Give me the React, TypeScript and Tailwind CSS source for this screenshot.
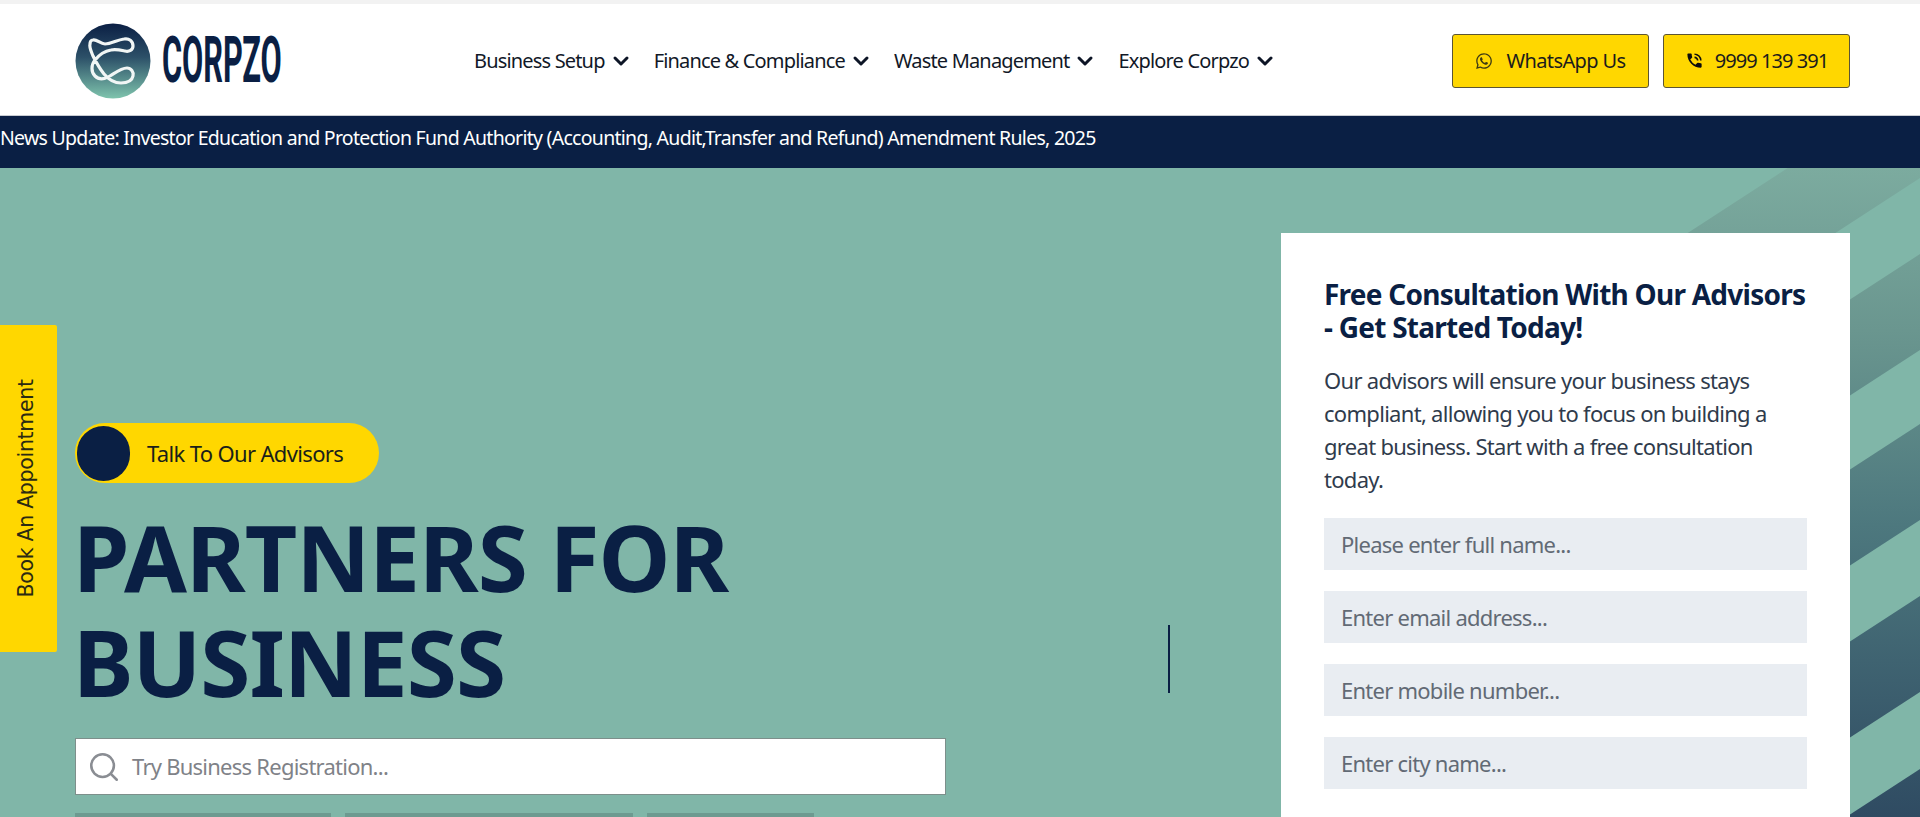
import { ChevronDown, Search } from 'lucide-react';
import { FaWhatsapp } from 'react-icons/fa';
import { MdPhoneInTalk } from 'react-icons/md';

const navItems = ['Business Setup', 'Finance & Compliance', 'Waste Management', 'Explore Corpzo'];
const placeholders = ['Please enter full name...', 'Enter email address...', 'Enter mobile number...', 'Enter city name...'];

function Logo() {
  return (
    <svg width="76" height="76" viewBox="0 0 76 76" className="shrink-0">
      <defs>
        <linearGradient id="logoFill" x1="0" y1="0" x2="0" y2="1">
          <stop offset="0" stopColor="#0b1f44" />
          <stop offset="0.45" stopColor="#2c5068" />
          <stop offset="1" stopColor="#7fc4ad" />
        </linearGradient>
      </defs>
      <circle cx="38" cy="38" r="37.5" fill="url(#logoFill)" />
      <path
        d="M18 17C22 16 25 21 30 21C36 21 42 17 49 16C54 15 58 18 58 23C58 27 54 29 50 28C45 27 41 26 36 27C30 28 24 32 20 37C16 42 16 49 20 53C24 57 30 56 35 53C40 50 46 45 52 45C56 45 59 49 58 53C57 58 52 60 46 60C40 60 34 57 29 51C25 46 21 39 18 33C16 28 14 24 15 21C15 19 16 17 18 17Z"
        fill="none"
        stroke="#f1f6f5"
        strokeWidth="3.2"
        strokeLinejoin="round"
      />
    </svg>
  );
}

function Stripes() {
  const bands = [128, 300, 470, 642, 815];
  return (
    <svg className="absolute inset-0" width="1920" height="649" viewBox="0 168 1920 649">
      <defs>
        <linearGradient id="bandFill" gradientUnits="userSpaceOnUse" x1="0" y1="168" x2="0" y2="817">
          <stop offset="0" stopColor="#7cab9f" />
          <stop offset="0.25" stopColor="#6a968f" />
          <stop offset="0.55" stopColor="#4d787e" />
          <stop offset="1" stopColor="#2f4b62" />
        </linearGradient>
      </defs>
      {bands.map(y => (
        <polygon
          key={y}
          points={`1920,${y - 46} 1920,${y + 50} 1600,${y + 258} 1600,${y + 162}`}
          fill="url(#bandFill)"
        />
      ))}
    </svg>
  );
}

export default function App() {
  return (
    <div className="h-[817px] overflow-hidden bg-white font-['Noto_Sans',sans-serif] text-[#0a1f44] relative">
      <div className="h-[4px] bg-[#f2f2f2]" />
      <header className="h-[112px] flex items-center pl-[75px] pr-[70px] pt-[2px] border-b border-[#c9ccd2]">
        <div className="flex items-center w-[399px] gap-[11px]">
          <Logo />
          <span className="font-['Roboto',sans-serif] font-bold text-[64px] leading-none w-[118px] inline-block origin-left scale-x-[0.48] whitespace-nowrap">
            CORPZO
          </span>
        </div>
        <nav className="flex items-center gap-[21px] text-[20px] tracking-[-0.83px] text-[#111827]">
          {navItems.map(item => (
            <a key={item} className="flex items-center gap-[4px] whitespace-nowrap">
              {item}
              <ChevronDown size={24} strokeWidth={3} className="text-[#0d1526]" />
            </a>
          ))}
        </nav>
        <div className="ml-auto flex items-center gap-[14px]">
          <a className="w-[197px] h-[54px] flex items-center justify-center gap-[13px] bg-[#ffd700] border border-[#5c5533] rounded-[3px] text-[20px] tracking-[-0.6px] text-[#1c1c1c]">
            <FaWhatsapp size={18} className="text-[#3e3a14]" />
            WhatsApp Us
          </a>
          <a className="w-[187px] h-[54px] flex items-center justify-center gap-[11px] bg-[#ffd700] border border-[#5c5533] rounded-[3px] text-[20px] tracking-[-0.95px] text-[#1c1c1c]">
            <MdPhoneInTalk size={19} className="text-[#0d0d0d]" />
            9999 139 391
          </a>
        </div>
      </header>
      <div className="h-[52px] flex items-center pb-[8px] bg-[#0a1f44] text-white text-[19.5px] tracking-[-0.72px] whitespace-nowrap">
        News Update: Investor Education and Protection Fund Authority (Accounting, Audit,Transfer and Refund) Amendment Rules, 2025
      </div>
      <main className="relative h-[649px] overflow-hidden bg-[#80b6a8] flex justify-between pl-[75px] pr-[70px]">
        <Stripes />
        <aside className="absolute left-0 top-[157px] w-[57px] h-[327px] bg-[#ffd700] rounded-r-[2px] flex items-center justify-center pr-[4px]">
          <span className="-rotate-90 whitespace-nowrap font-['DejaVu_Sans',sans-serif] text-[20.5px] tracking-[-0.3px] text-[#2b2a12]">
            Book An Appointment
          </span>
        </aside>
        <section className="relative w-[1095px] pt-[255px] flex flex-col items-start">
          <div className="shrink-0 w-[304px] h-[60px] bg-[#ffd700] rounded-full flex items-center pl-[2px] gap-[17px]">
            <span className="w-[53px] h-[55px] rounded-full bg-[#0a1f44]" />
            <span className="text-[22px] tracking-[-0.65px] text-[#1a1f1a]">Talk To Our Advisors</span>
          </div>
          <div className="shrink-0 w-full flex items-end justify-between mt-[22px]">
            <h1 className="-ml-[2px] text-[91px] leading-[105px] font-bold tracking-[-1px] text-[#0a1f44]">
              PARTNERS FOR
              <br />
              BUSINESS
            </h1>
            <span className="w-[2px] h-[68px] bg-[#0a1f44] mb-[22px]" />
          </div>
          <div className="shrink-0 w-[871px] h-[57px] mt-[23px] bg-white border border-[#7d8f8b] flex items-center pl-[11px] gap-[11px]">
            <Search size={34} strokeWidth={1.8} className="text-[#8a8d93]" />
            <span className="text-[22px] tracking-[-0.75px] text-[#7f8288]">Try Business Registration...</span>
          </div>
          <div className="shrink-0 flex gap-[14px] mt-[18px]">
            <span className="w-[256px] h-[30px] bg-[#6d9a90]" />
            <span className="w-[288px] h-[30px] bg-[#6d9a90]" />
            <span className="w-[167px] h-[30px] bg-[#6d9a90]" />
          </div>
        </section>
        <form className="relative w-[569px] h-[640px] mt-[65px] bg-white px-[43px] pt-[45px]">
          <h2 className="text-[28px] leading-[32.5px] font-bold tracking-[-0.75px] text-[#0a1f44]">
            Free Consultation With Our Advisors - Get Started Today!
          </h2>
          <p className="mt-[21px] text-[22px] leading-[33px] tracking-[-0.7px] text-[#2f3b4c]">
            Our advisors will ensure your business stays compliant, allowing you to focus on building a great business. Start with a free consultation today.
          </p>
          <div className="mt-[22px] flex flex-col gap-[21px]">
            {placeholders.map(text => (
              <div key={text} className="h-[52px] bg-[#e9edf2] flex items-center px-[17px] text-[22px] tracking-[-0.75px] text-[#626a75]">
                {text}
              </div>
            ))}
          </div>
        </form>
      </main>
    </div>
  );
}
